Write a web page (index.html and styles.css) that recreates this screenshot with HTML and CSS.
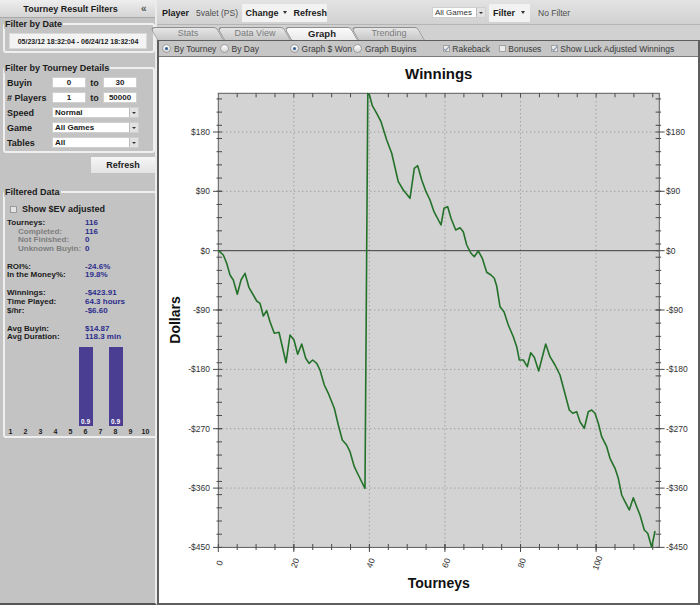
FILE: index.html
```html
<!DOCTYPE html>
<html lang="en">
<head>
  <meta charset="UTF-8" />
  <meta name="viewport" content="width=device-width, initial-scale=1.0" />
  <title>Tourney Results - Graph</title>
  <link rel="stylesheet" href="styles.css">
</head>
<body>
  <!-- Left filter panel -->
  <aside class="sidebar">
    <div class="side-head">
      <span class="side-title">Tourney Result Filters</span>
      <span class="collapse">«</span>
    </div>

    <fieldset class="group date-group">
      <legend>Filter by Date</legend>
      <div class="date-box">05/23/12 18:32:04 - 06/24/12 18:32:04</div>
    </fieldset>

    <fieldset class="group detail-group">
      <legend>Filter by Tourney Details</legend>
      <div class="frow"><span class="flabel">Buyin</span><span class="field num">0</span><span class="to">to</span><span class="field num">30</span></div>
      <div class="frow"><span class="flabel"># Players</span><span class="field num">1</span><span class="to">to</span><span class="field num">50000</span></div>
      <div class="frow"><span class="flabel">Speed</span><span class="field select">Normal<i class="drop"></i></span></div>
      <div class="frow"><span class="flabel">Game</span><span class="field select">All Games<i class="drop"></i></span></div>
      <div class="frow"><span class="flabel">Tables</span><span class="field select">All<i class="drop"></i></span></div>
    </fieldset>

    <div class="refresh-row"><span class="btn">Refresh</span></div>

    <fieldset class="group data-group">
      <legend>Filtered Data</legend>
      <div class="ev"><span class="box"></span>Show $EV adjusted</div>

      <div class="sgroup first">
        <div class="srow"><span>Tourneys:</span><b>116</b></div>
        <div class="srow sub"><span>Completed:</span><b>116</b></div>
        <div class="srow sub"><span>Not Finished:</span><b>0</b></div>
        <div class="srow sub"><span>Unknown Buyin:</span><b>0</b></div>
      </div>
      <div class="sgroup">
        <div class="srow"><span>ROI%:</span><b>-24.6%</b></div>
        <div class="srow"><span>In the Money%:</span><b>19.8%</b></div>
      </div>
      <div class="sgroup">
        <div class="srow"><span>Winnings:</span><b>-$423.91</b></div>
        <div class="srow"><span>Time Played:</span><b>64.3 hours</b></div>
        <div class="srow"><span>$/hr:</span><b>-$6.60</b></div>
      </div>
      <div class="sgroup">
        <div class="srow"><span>Avg Buyin:</span><b>$14.87</b></div>
        <div class="srow"><span>Avg Duration:</span><b>118.3 min</b></div>
      </div>

      <!-- finish position histogram -->
      <div class="hist">
        <div class="col"></div>
        <div class="col"></div>
        <div class="col"></div>
        <div class="col"></div>
        <div class="col"></div>
        <div class="col"><div class="bar" style="height: 79px">0.9</div></div>
        <div class="col"></div>
        <div class="col"><div class="bar" style="height: 79px">0.9</div></div>
        <div class="col"></div>
        <div class="col"></div>
      </div>
      <div class="hist-labels">
        <span>1</span><span>2</span><span>3</span><span>4</span><span>5</span>
        <span>6</span><span>7</span><span>8</span><span>9</span><span>10</span>
      </div>
    </fieldset>
  </aside>

  <!-- Main area -->
  <main class="main">
    <div class="toolbar">
      <span class="player-label">Player</span>
      <span class="player-name">5valet (PS)</span>
      <div class="btn-group">
        <span class="tbtn change">Change<i class="caret"></i></span>
        <span class="tbtn">Refresh</span>
      </div>
      <span class="field game-select">All Games<i class="drop"></i></span>
      <span class="tbtn filter-btn">Filter<i class="caret"></i></span>
      <span class="no-filter">No Filter</span>
    </div>

    <div class="tabs">
      <span class="tab">Stats</span>
      <span class="tab">Data View</span>
      <span class="tab active">Graph</span>
      <span class="tab">Trending</span>
    </div>

    <div class="panel">
      <div class="options">
        <span class="opt o1"><i class="radio on"></i>By Tourney</span>
        <span class="opt o2"><i class="radio"></i>By Day</span>
        <span class="opt o3"><i class="radio on"></i>Graph $ Won</span>
        <span class="opt o4"><i class="radio"></i>Graph Buyins</span>
        <span class="opt o5"><i class="check on"></i>Rakeback</span>
        <span class="opt o6"><i class="check"></i>Bonuses</span>
        <span class="opt"><i class="check on"></i>Show Luck Adjusted Winnings</span>
      </div>

      <div class="chart">
        <svg class="graph" width="539" height="546" viewBox="159 57 539 546">
          <text class="g-title" x="438.8" y="79">Winnings</text>

          <rect class="plot" x="218.3" y="93.3" width="441" height="454.1"/>
          <path class="grid" d="M218.3 132H659.3M218.3 191.3H659.3M218.3 310H659.3M218.3 369.4H659.3M218.3 428.7H659.3M218.3 488.1H659.3M293.8 93.3V547.4M369.4 93.3V547.4M444.9 93.3V547.4M520.5 93.3V547.4M596.1 93.3V547.4"/>
          <path class="zero" d="M218.3 250.7H659.3"/>
          <rect class="frame" x="218.3" y="93.3" width="441" height="454.1"/>

          <path class="ticks" d="M216.5 534.2h5.5m-5.5-13.19h5.5m-5.5-13.19h5.5m-5.5-13.19h5.5m-5.5-13.19h5.5m-5.5-13.19h5.5m-5.5-13.19h5.5m-5.5-13.19h5.5m-5.5-13.19h5.5m-5.5-13.19h5.5m-5.5-13.19h5.5m-5.5-13.19h5.5m-5.5-13.19h5.5m-5.5-13.19h5.5m-5.5-13.19h5.5m-5.5-13.19h5.5m-5.5-13.19h5.5m-5.5-13.19h5.5m-5.5-13.19h5.5m-5.5-13.19h5.5m-5.5-13.19h5.5m-5.5-13.19h5.5m-5.5-13.19h5.5m-5.5-13.19h5.5m-5.5-13.19h5.5m-5.5-13.19h5.5m-5.5-13.19h5.5m-5.5-13.19h5.5m-5.5-13.19h5.5m-5.5-13.19h5.5m-5.5-13.19h5.5m-5.5-13.19h5.5m-5.5-13.19h5.5m-5.5-13.19h5.5
            M655.6 534.2h5.5m-5.5-13.19h5.5m-5.5-13.19h5.5m-5.5-13.19h5.5m-5.5-13.19h5.5m-5.5-13.19h5.5m-5.5-13.19h5.5m-5.5-13.19h5.5m-5.5-13.19h5.5m-5.5-13.19h5.5m-5.5-13.19h5.5m-5.5-13.19h5.5m-5.5-13.19h5.5m-5.5-13.19h5.5m-5.5-13.19h5.5m-5.5-13.19h5.5m-5.5-13.19h5.5m-5.5-13.19h5.5m-5.5-13.19h5.5m-5.5-13.19h5.5m-5.5-13.19h5.5m-5.5-13.19h5.5m-5.5-13.19h5.5m-5.5-13.19h5.5m-5.5-13.19h5.5m-5.5-13.19h5.5m-5.5-13.19h5.5m-5.5-13.19h5.5m-5.5-13.19h5.5m-5.5-13.19h5.5m-5.5-13.19h5.5m-5.5-13.19h5.5m-5.5-13.19h5.5m-5.5-13.19h5.5
            M213 132h9M213 191.3h9M213 250.7h9M213 310h9M213 369.4h9M213 428.7h9M213 488.1h9M213 547.4h9
            M655.6 132h9M655.6 191.3h9M655.6 250.7h9M655.6 310h9M655.6 369.4h9M655.6 428.7h9M655.6 488.1h9M655.6 547.4h9
            M237.2 544v6m18.89-6v6m18.89-6v6m18.89-6v6m18.89-6v6m18.89-6v6m18.89-6v6m18.89-6v6m18.89-6v6m18.89-6v6m18.89-6v6m18.89-6v6m18.89-6v6m18.89-6v6m18.89-6v6m18.89-6v6m18.89-6v6m18.89-6v6m18.89-6v6m18.89-6v6m18.89-6v6m18.89-6v6m18.89-6v6
            M218.3 544v8M293.8 544v8M369.4 544v8M444.9 544v8M520.5 544v8M596.1 544v8
            M237.2 93.3v4m18.89-4v4m18.89-4v4m18.89-4v4m18.89-4v4m18.89-4v4m18.89-4v4m18.89-4v4m18.89-4v4m18.89-4v4m18.89-4v4m18.89-4v4m18.89-4v4m18.89-4v4m18.89-4v4m18.89-4v4m18.89-4v4m18.89-4v4m18.89-4v4m18.89-4v4m18.89-4v4m18.89-4v4m18.89-4v4"/>

          <polyline class="line" points="218.3,250.3 223.3,255 226.7,263.3 230,275 233.3,280 237.3,294.3 241,280 245,273.3 249,287.7 253.3,295 256.7,301 260,303.3 263.3,316 266.7,310.7 270,321.7 274.3,333.3 279,332.3 282.7,348.3 286,362.7 290,335 294,340 297.7,354.3 301.7,344 305.7,358.3 309,363.3 312.7,360 316.7,363.3 320,370 324.3,385 328.3,393.3 334.3,408.3 338.3,425 342.3,440 346.7,445 350,451.7 354.3,466.7 358.3,475 365,488.3 367.8,93.5 369.5,95 372.3,105.7 376.7,113.3 381,121.7 386.7,140 391.7,153.3 398.3,181.7 403.3,190 410,198.3 414.3,168.3 417.7,165.7 421.7,180 426,191.7 430,200 434,211.7 441,225 444,208.3 447.7,206.7 451,218.3 455.7,230 460,227.7 463.3,231.7 466.7,245 471,253.3 474.3,256.7 478.3,251 482.3,258.3 486.7,272.3 491,275 494.3,278.3 496.7,286 500,306.7 504,311.7 508.3,325 513.3,336.7 516.7,346.7 519.3,360 523.3,360 527.3,366.7 530.7,352.7 534.3,357.3 538.7,371 545.7,344 550,356.7 555,365 560,375 564,390 569.3,410 572.7,413.3 576.7,411.7 580,421.7 584.3,428.3 588.3,411.7 591.7,410 595,413.3 598.3,423.3 601.7,436.7 606.7,446.7 610,458.3 615,468.3 618.3,478.3 621.7,495 625,501.7 629.3,510 633.3,497.7 636.7,506.7 640,515 644.3,530 647.7,533.3 651.7,547.3 655,531"/>

          <g class="ylab left">
            <text x="210" y="135">$180</text>
            <text x="210" y="194.3">$90</text>
            <text x="210" y="253.7">$0</text>
            <text x="210" y="313">-$90</text>
            <text x="210" y="372.4">-$180</text>
            <text x="210" y="431.7">-$270</text>
            <text x="210" y="491.1">-$360</text>
            <text x="210" y="550.4">-$450</text>
          </g>
          <g class="ylab right">
            <text x="666" y="135">$180</text>
            <text x="666" y="194.3">$90</text>
            <text x="666" y="253.7">$0</text>
            <text x="666" y="313">-$90</text>
            <text x="666" y="372.4">-$180</text>
            <text x="666" y="431.7">-$270</text>
            <text x="666" y="491.1">-$360</text>
            <text x="666" y="550.4">-$450</text>
          </g>
          <g class="xlab">
            <text transform="translate(219.5 563) rotate(-70)">0</text>
            <text transform="translate(295 563) rotate(-70)">20</text>
            <text transform="translate(370.6 563) rotate(-70)">40</text>
            <text transform="translate(446.1 563) rotate(-70)">60</text>
            <text transform="translate(521.7 563) rotate(-70)">80</text>
            <text transform="translate(597.3 563) rotate(-70)">100</text>
          </g>

          <text class="axis-title" x="438.8" y="588">Tourneys</text>
          <text class="axis-title" transform="translate(180 320) rotate(-90)">Dollars</text>
        </svg>
      </div>
    </div>
  </main>
</body>
</html>
```

FILE: styles.css
```css
/* Global */
* {
  box-sizing: border-box;
}
body {
  margin: 0;
  width: 700px;
  height: 605px;
  overflow: hidden;
  display: flex;
  font-family: "Liberation Sans", Arial, sans-serif;
  color: #1b1b1b;
  background: #c3c3c3;
}

/* Left filter panel */
.sidebar {
  width: 157px;
  flex: none;
  background: #c3c3c3;
  border-right: 2px solid #ebebeb;
  border-bottom: 2px solid #555;
}
.side-head {
  height: 18px;
  display: flex;
  align-items: center;
  background: linear-gradient(#eeeeee, #d4d4d4);
  border-bottom: 1px solid #a8a8a8;
  font-size: 9px;
  font-weight: bold;
}
.side-title {
  flex: 1;
  text-align: center;
}
.collapse {
  width: 14px;
  font-size: 10px;
  color: #555;
}

/* Fieldset groups */
.group {
  width: 152px;
  margin: 0 0 0 3px;
  padding: 0 3px 2px 2px;
  border: 2px solid #efefef;
  border-radius: 3px;
}
.group legend {
  margin-left: -3px;
  padding: 0 1px;
  font-size: 9px;
  font-weight: bold;
  line-height: 10px;
}
.date-group {
  margin-top: 1px;
}
.date-box {
  margin: 4px 0 0 2px;
  width: 138px;
  height: 16px;
  line-height: 16px;
  text-align: center;
  font-size: 7px;
  font-weight: bold;
  background: #f3f3f3;
  border: 1px solid #dadada;
}
.detail-group {
  margin-top: 10px;
  padding-bottom: 3px;
}
.frow {
  display: flex;
  align-items: center;
  height: 11px;
  margin-top: 4px;
  font-size: 9px;
  font-weight: bold;
}
.flabel {
  width: 45px;
}
.field {
  position: relative;
  height: 11px;
  line-height: 10px;
  background: #fff;
  border: 1px solid #cfcfcf;
  font-size: 8px;
  font-weight: bold;
}
.field.num {
  width: 34px;
  text-align: center;
}
.to {
  width: 17px;
  text-align: center;
}
.field.select {
  width: 87px;
  padding-left: 2px;
}
.drop {
  position: absolute;
  top: 0;
  right: 0;
  bottom: 0;
  width: 9px;
  background: #e2e2e2;
  border-left: 1px solid #bcbcbc;
}
.drop::after {
  content: "";
  position: absolute;
  left: 2px;
  top: 4px;
  border-left: 2px solid transparent;
  border-right: 2px solid transparent;
  border-top: 2px solid #333;
}
.refresh-row {
  display: flex;
  justify-content: flex-end;
  margin-top: 4px;
}
.btn {
  width: 64px;
  height: 16px;
  line-height: 16px;
  text-align: center;
  font-size: 9px;
  font-weight: bold;
  background: linear-gradient(#f6f6f6, #e3e3e3);
}

/* Filtered data */
.data-group {
  margin-top: 14px;
  padding-bottom: 0;
}
.ev {
  display: flex;
  align-items: center;
  height: 8px;
  margin-top: 8px;
  font-size: 9px;
  font-weight: bold;
}
.ev .box {
  width: 7px;
  height: 7px;
  margin: 0 5px 0 3px;
  background: #e4e4e4;
  border: 1px solid #9a9a9a;
}
.sgroup {
  margin-top: 9.4px;
}
.sgroup.first {
  margin-top: 6px;
}
.srow {
  display: flex;
  font-size: 8px;
  line-height: 8.6px;
  font-weight: bold;
  white-space: nowrap;
}
.srow span {
  width: 78px;
}
.srow.sub span {
  padding-left: 11px;
  color: #7e7e7e;
}
.srow b {
  color: #2d2d8c;
}
.hist,
.hist-labels {
  display: grid;
  grid-template-columns: repeat(10, 15px);
  margin-left: -4px;
}
.hist {
  height: 79px;
  margin-top: 5px;
  align-items: end;
}
.col {
  display: flex;
  justify-content: center;
}
.bar {
  width: 14px;
  background: #4a3e92;
  color: #fff;
  font-size: 6.5px;
  font-weight: bold;
  text-align: center;
  display: flex;
  align-items: flex-end;
  justify-content: center;
  padding-bottom: 1px;
}
.hist-labels {
  margin-top: 1px;
  height: 9px;
  line-height: 9px;
  font-size: 7px;
  font-weight: bold;
  text-align: center;
}

/* Main area */
.main {
  flex: 1;
  display: flex;
  flex-direction: column;
}
.toolbar {
  height: 25px;
  display: flex;
  align-items: center;
  padding: 1px 0 0 5px;
  background: linear-gradient(#e3e3e3, #d1d1d1);
  border-bottom: 1px solid #b5b5b5;
  font-size: 9px;
}
.player-label {
  width: 34px;
  font-weight: bold;
}
.player-name {
  width: 46px;
  font-size: 8.5px;
  color: #4d4d4d;
}
.btn-group {
  width: 85px;
  height: 18px;
  display: flex;
  align-items: center;
  padding-left: 3.5px;
  background: #f2f2f2;
}
.tbtn {
  display: flex;
  align-items: center;
  font-weight: bold;
}
.tbtn.change {
  width: 48.5px;
}
.caret {
  margin-left: 4px;
  border-left: 2.5px solid transparent;
  border-right: 2.5px solid transparent;
  border-top: 3px solid #333;
}
.game-select {
  width: 54px;
  margin-left: 105px;
  padding-left: 2px;
  font-weight: normal;
  color: #333;
}
.filter-btn {
  width: 41px;
  height: 18px;
  margin-left: 3px;
  padding-left: 4px;
  background: #f2f2f2;
}
.filter-btn .caret {
  margin-left: 6px;
}
.no-filter {
  margin-left: 8px;
  font-size: 8.5px;
  color: #4d4d4d;
}

/* Tabs */
.tabs {
  height: 15px;
  display: flex;
  align-items: flex-end;
  background: #d1d1d1;
}
.tab {
  position: relative;
  z-index: 1;
  width: 67px;
  height: 13px;
  line-height: 13px;
  padding-right: 5px;
  text-align: center;
  font-size: 9px;
  color: #7b7b7b;
}
.tab::before {
  content: "";
  position: absolute;
  z-index: -1;
  top: 0;
  bottom: 0;
  left: 0;
  right: 0;
  border: 1px solid #8e8e8e;
  border-bottom: 0;
  border-radius: 5px 3px 0 0;
  background: linear-gradient(#e6e6e6, #c8c8c8);
  transform: skewX(30deg);
  transform-origin: 0 100%;
}
.tab.active {
  z-index: 2;
  font-weight: bold;
  font-size: 9.5px;
  color: #1e1e1e;
}
.tab.active::before {
  background: linear-gradient(#fbfbfb, #e9e9e9);
}

/* Graph panel */
.panel {
  flex: 1;
  display: flex;
  flex-direction: column;
  border: 2px solid #5e5e5e;
  border-top-width: 1px;
}
.options {
  height: 16px;
  display: flex;
  align-items: center;
  padding-left: 3px;
  background: #c6c6c6;
  border-bottom: 1px solid #7a7a7a;
  font-size: 8.5px;
  color: #3a3a3a;
}
.opt {
  display: flex;
  align-items: center;
  white-space: nowrap;
}
.o1 { width: 57.6px; }
.o2 { width: 70px; }
.o3 { width: 63.4px; }
.o4 { width: 89.8px; }
.o5 { width: 56px; }
.o6 { width: 52px; }
.radio {
  position: relative;
  width: 9px;
  height: 9px;
  margin-right: 3px;
  border-radius: 50%;
  border: 1px solid #9c9c9c;
  background: linear-gradient(#fdfdfd, #d6d6d6);
}
.radio.on::after {
  content: "";
  position: absolute;
  left: 2px;
  top: 2px;
  width: 3px;
  height: 3px;
  border-radius: 50%;
  background: #2f5d96;
}
.check {
  position: relative;
  width: 7px;
  height: 7px;
  margin-right: 2.5px;
  border: 1px solid #a2a2a2;
  background: #ececec;
}
.check.on::after {
  content: "";
  position: absolute;
  left: 1.5px;
  top: -1px;
  width: 2px;
  height: 5px;
  border: solid #7a8fa8;
  border-width: 0 1px 1px 0;
  transform: rotate(40deg);
}
.chart {
  flex: 1;
  background: #fff;
}
.graph {
  display: block;
  font-family: "Liberation Sans", Arial, sans-serif;
}
.g-title {
  font-size: 15px;
  font-weight: bold;
  text-anchor: middle;
  fill: #111;
}
.plot {
  fill: #d3d3d3;
}
.grid {
  fill: none;
  stroke: #8a8a8a;
  stroke-width: 1;
  stroke-dasharray: 1 3;
}
.zero {
  stroke: #3a3a3a;
  stroke-width: 1;
}
.frame {
  fill: none;
  stroke: #5a5a5a;
  stroke-width: 1;
}
.ticks {
  fill: none;
  stroke: #4a4a4a;
  stroke-width: 1;
}
.line {
  fill: none;
  stroke: #24722a;
  stroke-width: 1.6;
  stroke-linejoin: round;
}
.ylab text {
  font-size: 8.5px;
  fill: #333;
}
.ylab.left text {
  text-anchor: end;
}
.xlab text {
  font-size: 8.5px;
  fill: #333;
  text-anchor: middle;
  dominant-baseline: central;
}
.axis-title {
  font-size: 14px;
  font-weight: bold;
  text-anchor: middle;
  fill: #111;
}
```
